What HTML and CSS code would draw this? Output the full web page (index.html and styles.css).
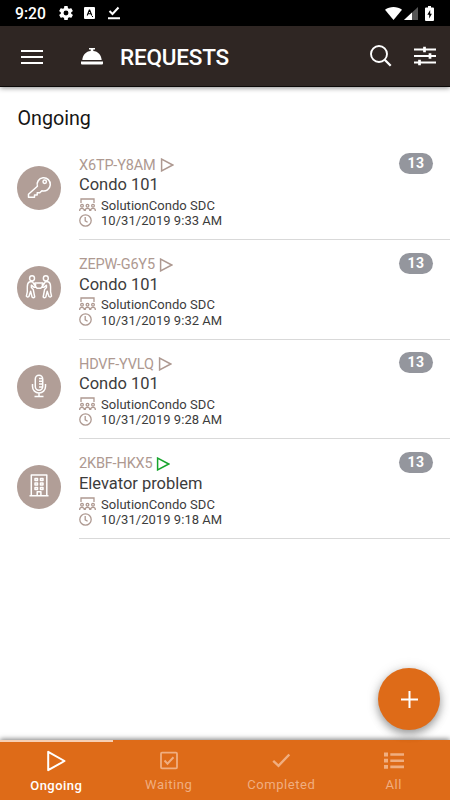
FILE: index.html
```html
<!DOCTYPE html>
<html lang="en">
<head>
<meta charset="utf-8">
<title>Requests</title>
<link rel="stylesheet" href="styles.css">
</head>
<body>
<svg class="defs" aria-hidden="true">
  <symbol id="play" viewBox="0 0 14 14"><path d="M1.600 1.100v11.800L12.700 7z"/></symbol>
  <symbol id="group" viewBox="0 0 17 14"><path d="M2 5V1h13v4"/><circle cx="3" cy="7.700" r="1.350"/><circle cx="8.500" cy="7.700" r="1.350"/><circle cx="14" cy="7.700" r="1.350"/><path d="M.7 13v-.6c0-2.600 4.600-2.600 4.600 0v.6M6.200 13v-.6c0-2.600 4.600-2.600 4.600 0v.6M11.700 13v-.6c0-2.600 4.600-2.600 4.600 0v.6"/></symbol>
  <symbol id="clock" viewBox="0 0 13 13"><circle cx="6.500" cy="6.500" r="5.700"/><path d="M6.200 3v3.800l2.400 1.500"/></symbol>
</svg>
<div class="status">
  <span class="time">9:20</span>
  <svg class="gear" viewBox="2 2 20 20"><path fill="#fff" d="M19.400 13a7.500 7.500 0 0 0 0-2l2.100-1.600c.2-.2.300-.4.100-.6l-2-3.500c-.1-.2-.4-.3-.6-.2l-2.500 1a7 7 0 0 0-1.700-1l-.4-2.600a.5.500 0 0 0-.5-.5h-4a.5.500 0 0 0-.4.500L9.200 5.100a7 7 0 0 0-1.700 1l-2.500-1c-.2-.1-.5 0-.6.200l-2 3.500c-.1.200-.1.500.1.600L4.600 11a7.500 7.500 0 0 0 0 2l-2.100 1.600c-.2.200-.2.400-.1.600l2 3.500c.1.200.4.300.6.200l2.500-1a7 7 0 0 0 1.700 1l.3 2.600c.1.300.2.500.5.500h4c.2 0 .4-.2.500-.5l.4-2.600a7 7 0 0 0 1.700-1l2.500 1c.2.100.5 0 .6-.2l2-3.500c.1-.2.100-.4-.1-.6zM12 15.500a3.500 3.500 0 1 1 0-7 3.500 3.500 0 0 1 0 7z"/></svg>
  <svg class="akey" viewBox="0 0 11 12"><rect width="11" height="12" rx="1" fill="#fff"/><path d="M3.200 8.500 5.300 3h.4l2.100 5.500M4 6.800h3M8 9.500h1" fill="none" stroke="#000" stroke-width="1.100"/></svg>
  <svg class="done" viewBox="0 0 12 14"><path d="m1.500 5 3 3L10.500 1.500M0 12.300h12" fill="none" stroke="#fff" stroke-width="2"/></svg>
  <span class="grow"></span>
  <svg class="wifi" viewBox="0 0 17 13"><path d="M8.500 13 0 2.700C4.800-.9 12.200-.9 17 2.700z" fill="#fff"/></svg>
  <svg class="signal" viewBox="0 0 14 13"><path d="M0 13 14 0v13z" fill="#555"/><path d="M0 13 8 5.500V13z" fill="#fff"/></svg>
  <svg class="battery" viewBox="0 0 9 15"><path d="M3 0h3v1.500h2q1 0 1 1V14q0 1-1 1H1q-1 0-1-1V2.500q0-1 1-1h2z" fill="#fff"/><path d="M5.200 4 2.300 8.700h1.900V12.500l2.700-4.700H5.200z" fill="#000"/></svg>
</div>
<header class="bar">
  <svg class="menu" viewBox="0 0 22 14"><path d="M0 1h22M0 7h22M0 13h22" stroke="#fff" stroke-width="1.800"/></svg>
  <svg class="bell" viewBox="0 0 22 17"><path d="M8 0h6v1.500h-1.700V3C17 3.300 20.300 7 20.700 12H1.300C1.700 7 5 3.300 9.700 3V1.500H8zM0 13.500h22v2q0 1-1 1H1q-1 0-1-1z" fill="#fff"/></svg>
  <h1>REQUESTS</h1>
  <svg class="search" viewBox="0 0 22 22"><circle cx="9" cy="9" r="8" fill="none" stroke="#fff" stroke-width="1.900"/><path d="m14.700 14.700 6 6" stroke="#fff" stroke-width="2.300"/></svg>
  <svg class="sliders" viewBox="0 0 22 20"><path d="M0 3.500h22M0 10h22M0 16.500h22" stroke="#fff" stroke-width="1.900"/><path d="M10.500.7v5.600M16 7.200v5.600M5.500 13.700v5.600" stroke="#fff" stroke-width="2.700"/></svg>
</header>
<main>
  <h2>Ongoing</h2>
  <section class="row">
    <div class="avatar"><svg viewBox="0 0 44 44"><path d="M20.400 20.300a6.600 6.600 0 1 1 4.500 4.400l-2.100 2.100h-2.600v2.200h-2.700v2.300H11.500v-3z"/><circle cx="27.700" cy="15.700" r="1.700"/></svg></div>
    <div class="body">
      <div class="info">
        <div class="code"><span>X6TP-Y8AM</span><svg class="play"><use href="#play"/></svg></div>
        <div class="name">Condo 101</div>
        <div class="meta"><svg class="group"><use href="#group"/></svg><span>SolutionCondo SDC</span></div>
        <div class="meta"><svg class="clock"><use href="#clock"/></svg><span>10/31/2019 9:33 AM</span></div>
      </div>
      <span class="badge">13</span>
    </div>
  </section>
  <section class="row">
    <div class="avatar"><svg viewBox="0 0 44 44"><g transform="translate(.8 .3) scale(.95 1)"><circle cx="15" cy="12" r="2.600"/><circle cx="29.500" cy="12" r="2.600"/><path d="M12.500 15.500q-2.500 1-2.500 5v5l-1 4.300q1.200 1.700 2.700.4l1.800-5.200 1.500 5.700q1.500 1.400 2.800 0l-1.500-7.500-2-2v-2.300l2.500 2h2.700M12.500 15.500h3l2 3h2M32 15.500q2.500 1 2.500 5v5l1 4.300q-1.200 1.700-2.700.4L31 25l-1.500 5.700q-1.500 1.400-2.800 0l1.500-7.500 2-2v-2.300l-2.500 2H25M32 15.500h-3l-2 3h-2M18 16.800h8.500v2.500l-2.300 2.600h-4L18 19.300z"/></g></svg></div>
    <div class="body">
      <div class="info">
        <div class="code"><span>ZEPW-G6Y5</span><svg class="play"><use href="#play"/></svg></div>
        <div class="name">Condo 101</div>
        <div class="meta"><svg class="group"><use href="#group"/></svg><span>SolutionCondo SDC</span></div>
        <div class="meta"><svg class="clock"><use href="#clock"/></svg><span>10/31/2019 9:32 AM</span></div>
      </div>
      <span class="badge">13</span>
    </div>
  </section>
  <section class="row">
    <div class="avatar"><svg viewBox="0 0 44 44"><rect x="18.300" y="10.300" width="7.400" height="15" rx="3.700"/><path d="M15.500 19v2.500a6.500 6.500 0 0 0 13 0V19M22 28v3.500M17.500 31.500h9M22 13.500h3.500M22 16.300h3.500M22 19.100h3.500M22 21.900h3.500"/></svg></div>
    <div class="body">
      <div class="info">
        <div class="code"><span>HDVF-YVLQ</span><svg class="play"><use href="#play"/></svg></div>
        <div class="name">Condo 101</div>
        <div class="meta"><svg class="group"><use href="#group"/></svg><span>SolutionCondo SDC</span></div>
        <div class="meta"><svg class="clock"><use href="#clock"/></svg><span>10/31/2019 9:28 AM</span></div>
      </div>
      <span class="badge">13</span>
    </div>
  </section>
  <section class="row">
    <div class="avatar"><svg viewBox="0 0 44 44"><path d="M12.500 30.700h19M14.300 30.700V10h15.500v20.700M20.200 30.700v-4h3.700v4"/><path d="M18 13.500h2.500v2H18zM23.500 13.500H26v2h-2.500zM18 18h2.500v2H18zM23.500 18H26v2h-2.500zM18 22.500h2.500v2H18zM23.500 22.500H26v2h-2.500z"/></svg></div>
    <div class="body">
      <div class="info">
        <div class="code"><span>2KBF-HKX5</span><svg class="play green"><use href="#play"/></svg></div>
        <div class="name">Elevator problem</div>
        <div class="meta"><svg class="group"><use href="#group"/></svg><span>SolutionCondo SDC</span></div>
        <div class="meta"><svg class="clock"><use href="#clock"/></svg><span>10/31/2019 9:18 AM</span></div>
      </div>
      <span class="badge">13</span>
    </div>
  </section>
</main>
<button class="fab" aria-label="Add"><svg viewBox="0 0 17 17"><path d="M8.500 0v17M0 8.500h17" stroke="#fff" stroke-width="2"/></svg></button>
<nav class="tabs">
  <a class="tab active"><svg viewBox="0 0 22 22"><path d="M3.200 1.800v18.400L19.500 11z" stroke-width="2" stroke-linejoin="round"/></svg><span>Ongoing</span></a>
  <a class="tab"><svg viewBox="0 0 22 22"><rect x="3" y="2.700" width="16" height="15.600" rx="1" stroke-width="1.800"/><path d="m6.500 10.500 3 3.200 6-6.400" stroke-width="2"/></svg><span>Waiting</span></a>
  <a class="tab"><svg viewBox="0 0 22 22"><path d="m3.200 10.800 5.300 5L19.300 4.500" stroke-width="2.400"/></svg><span>Completed</span></a>
  <a class="tab"><svg viewBox="0 0 22 22"><path d="M1 4.500h4M1 10.700h4M1 16.900h4" stroke-width="3.800"/><path d="M7.300 4.500H21M7.300 10.700H21M7.300 16.900H21" stroke-width="2.600"/></svg><span>All</span></a>
</nav>
</body>
</html>
```
FILE: styles.css
```css
* { box-sizing: border-box; }
body {
  margin: 0;
  height: 800px;
  display: flex;
  flex-direction: column;
  position: relative;
  overflow: hidden;
  background: #fff;
  font-family: Roboto, "Liberation Sans", sans-serif;
  color: #3c3c3c;
}
svg { display: block; flex: none; }
.defs { position: absolute; width: 0; height: 0; }
.status {
  height: 26px;
  flex: none;
  background: #000;
  color: #fff;
  display: flex;
  align-items: center;
  padding: 0 16px 0 15px;
}
.time { font-size: 15.700px; font-weight: 500; width: 44px; line-height: 26px; padding-top: 2px; }
.gear { width: 14px; height: 14px; }
.akey { width: 11px; height: 12px; margin-left: 11px; }
.done { width: 12px; height: 14px; margin-left: 13px; }
.grow { flex: 1; }
.wifi { width: 17px; height: 13px; }
.signal { width: 14px; height: 13px; margin: 1px 7px 0 2px; }
.battery { width: 9px; height: 15px; }
.bar {
  height: 61px;
  flex: none;
  background: #2f2623;
  border-bottom: 1px solid #0c0908;
  box-shadow: 0 1px 5px rgba(0, 0, 0, .45);
  display: flex;
  align-items: center;
  padding: 0 14px 0 21px;
}
.menu { width: 22px; height: 14px; margin-top: 2px; }
.bell { width: 22px; height: 17px; margin-left: 38px; }
h1 {
  margin: 1px 0 0 17px;
  flex: 1;
  color: #fff;
  font-size: 22.500px;
  font-weight: 500;
  letter-spacing: -.2px;
}
.search { width: 22px; height: 22px; }
.sliders { width: 22px; height: 20px; margin-left: 22px; }
main { flex: 1; }
h2 {
  margin: 0;
  height: 53.500px;
  padding: 19px 0 0 17.500px;
  color: #151515;
  font-size: 19.700px;
  line-height: 26px;
  font-weight: 400;
}
.row { display: flex; height: 99.600px; padding-left: 17px; }
.avatar {
  width: 44px;
  height: 44px;
  margin: 25.500px 18px 0 0;
  border-radius: 50%;
  background: #b19e97;
}
.avatar svg { width: 44px; height: 44px; fill: none; stroke: #fff; stroke-width: 1.500; stroke-linejoin: round; }
.body {
  flex: 1;
  display: flex;
  justify-content: space-between;
  border-bottom: 1px solid #d9d9d9;
  padding: 12.500px 17px 0 0;
}
.info { padding-top: 1px; }
.code { display: flex; align-items: center; height: 22px; color: #ae9991; font-size: 14.500px; letter-spacing: -.17px; }
.play { width: 14px; height: 14px; margin-left: 4px; fill: none; stroke: #ae9991; stroke-width: 1.500; }
.green { stroke: #18a52e; }
.name { font-size: 16.500px; line-height: 18px; height: 21px; letter-spacing: -.03px; }
.meta { display: flex; align-items: center; height: 15.500px; font-size: 13px; line-height: 15px; letter-spacing: .04px; }
.meta span { padding-top: 1px; }
.meta svg { fill: none; stroke: #ae9991; stroke-width: 1.300; }
.group { width: 17px; height: 14px; margin-right: 5px; }
.clock { width: 13px; height: 13px; margin-right: 9px; }
.badge {
  width: 34px;
  height: 21px;
  border-radius: 10.500px;
  background: #94969d;
  color: #fff;
  font-size: 14px;
  font-weight: 700;
  letter-spacing: .5px;
  line-height: 20px;
  text-align: center;
}
.fab {
  position: absolute;
  left: 378px;
  top: 668px;
  width: 62px;
  height: 62px;
  border: 0;
  padding: 0;
  border-radius: 50%;
  background: #de6b18;
  display: flex;
  align-items: center;
  justify-content: center;
  box-shadow: 0 4px 8px rgba(0, 0, 0, .35), 0 1px 14px rgba(0, 0, 0, .12);
}
.fab svg { width: 17px; height: 17px; }
.tabs {
  height: 60px;
  flex: none;
  background: #de6b18;
  display: grid;
  grid-template-columns: repeat(4, 1fr);
  box-shadow: 0 -1px 5px rgba(0, 0, 0, .5);
}
.tab {
  display: flex;
  flex-direction: column;
  align-items: center;
  padding-top: 8px;
  border-top: 2px solid transparent;
  color: #f0ae80;
  font-size: 13px;
  letter-spacing: .55px;
  line-height: 16px;
}
.tab svg { width: 22px; height: 22px; fill: none; stroke: #f0ae80; margin-bottom: 4.500px; }
.active { border-top-color: #f7cfb4; color: #fff; font-weight: 500; letter-spacing: .45px; }
.active svg { stroke: #fff; margin-bottom: 5.500px; }
```
